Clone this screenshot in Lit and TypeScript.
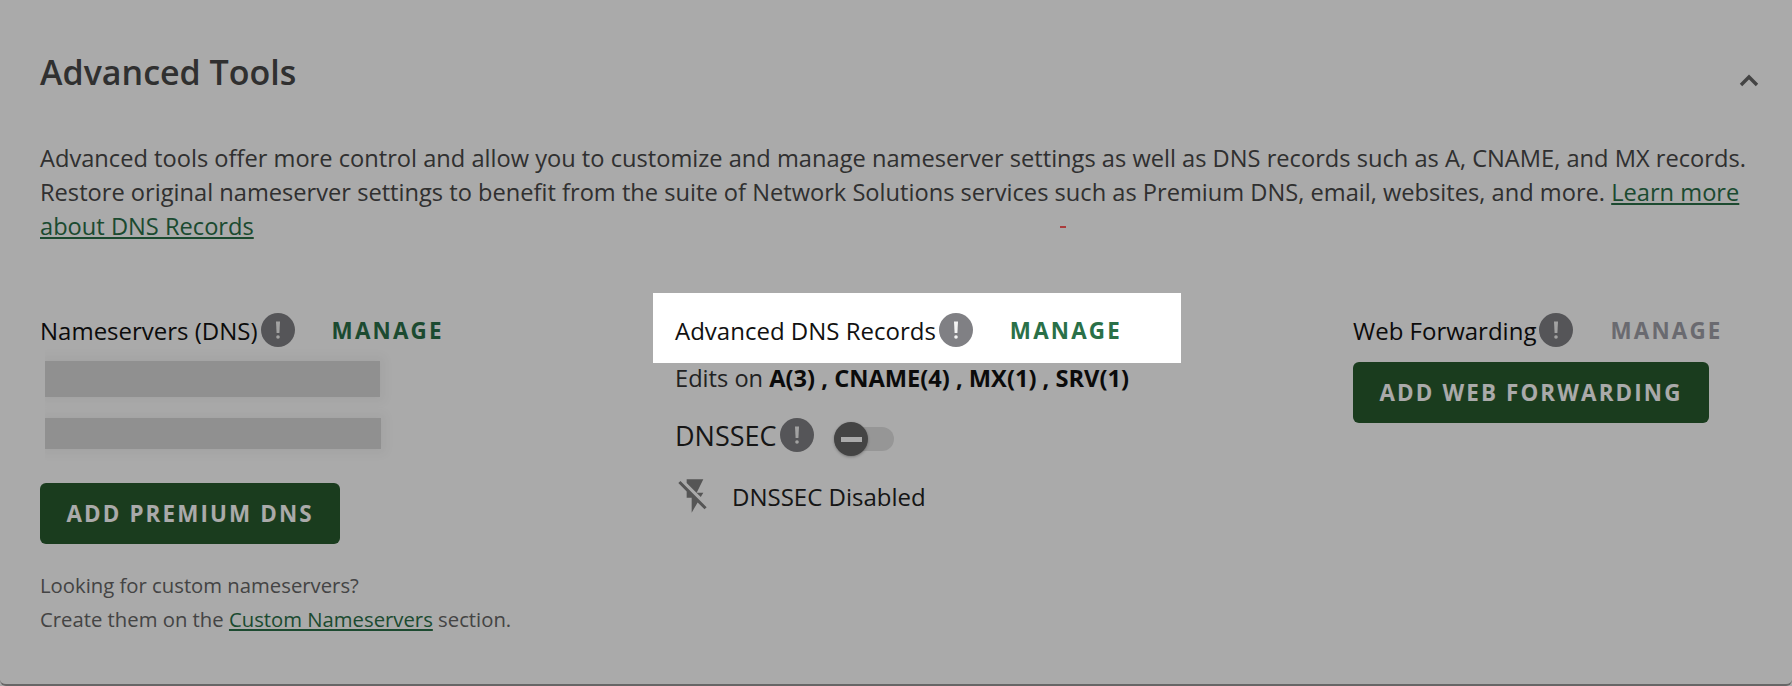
import { LitElement, html, css, svg } from "lit";
import { customElement } from "lit/decorators.js";

const info = html`<span class="info" aria-hidden="true"><svg viewBox="0 0 34 34" width="34" height="34"><path d="M15 8.5h4l-.6 11.5h-2.8z" fill="#f4f4f4"/><circle cx="17" cy="24" r="1.8" fill="#f4f4f4"/></svg></span>`;

@customElement("app-root")
export class AppRoot extends LitElement {
  static styles = css`
    :host {
      display: block;
      position: relative;
      width: 1792px;
      height: 686px;
      overflow: hidden;
      background: #fff;
      font-family: "Open Sans", "Noto Sans", sans-serif;
      color: #333;
    }
    .card {
      box-sizing: border-box;
      height: 686px;
      padding: 46px 40px 0;
      border-bottom: 2px solid #999;
      border-radius: 0 0 6px 6px;
    }
    .head {
      display: flex;
      justify-content: space-between;
      height: 52px;
    }
    h2 {
      margin: 0;
      font-size: 34px;
      line-height: 52px;
      font-weight: 600;
      color: #484848;
    }
    .chev {
      margin: 26px -8px 0 0;
      display: block;
    }
    p.intro {
      margin: 43px 0 0;
      font-size: 23.65px;
      line-height: 34px;
      color: #484848;
    }
    a {
      color: #2a7048;
      text-decoration: underline;
    }
    .cols {
      margin-top: 70px;
      display: grid;
      grid-template-columns: 635px 678px 1fr;
    }
    .row {
      display: flex;
      align-items: center;
      height: 34px;
      font-size: 24px;
      color: #111;
    }
    .info {
      flex: none;
      display: block;
      width: 34px;
      height: 34px;
      margin-left: 3px;
      border-radius: 50%;
      background: #808084;
    }
    .info svg {
      display: block;
    }
    .manage {
      margin-left: 37px;
      font-size: 22.4px;
      font-weight: 700;
      letter-spacing: 2.2px;
      color: #2a7048;
    }
    .manage.off {
      color: #a0a0a8;
    }
    .redact {
      background: #d8d8d8;
      box-shadow: 0 0 10px 5px #f6f6f6;
      clip-path: inset(-14px -14px -14px 0);
      margin-left: 5px;
    }
    .r1 {
      width: 335px;
      height: 36px;
      margin-top: 14px;
    }
    .r2 {
      width: 336px;
      height: 31px;
      margin-top: 21px;
    }
    .btn {
      display: inline-flex;
      align-items: center;
      box-sizing: border-box;
      height: 61px;
      padding: 0 26.5px;
      border: 0;
      border-radius: 6px;
      background: #285a2e;
      color: #fff;
      font: 700 22.4px "Open Sans", sans-serif;
      letter-spacing: 2.13px;
    }
    .c1 .btn {
      margin-top: 34px;
    }
    .c3 .btn {
      margin-top: 15px;
    }
    .hint {
      margin: 24px 0 0;
      font-size: 20.3px;
      line-height: 34px;
      color: #666;
    }
    .edits {
      margin-top: 14px;
      height: 34px;
      line-height: 34px;
      font-size: 23.65px;
      color: #333;
    }
    .edits b {
      color: #111;
      font-weight: 700;
    }
    .dnssec {
      margin-top: 21px;
      display: flex;
      align-items: center;
      height: 38px;
      font-size: 27px;
      color: #222;
    }
    .toggle {
      position: relative;
      margin-left: 20px;
      width: 60px;
      height: 24px;
      border-radius: 12px;
      background: #e2e2e2;
      top: 4px;
    }
    .knob {
      position: absolute;
      left: 0;
      top: -5px;
      width: 34px;
      height: 34px;
      border-radius: 50%;
      background: #666;
      box-shadow: 0 1px 3px rgba(0, 0, 0, 0.3);
    }
    .knob::after {
      content: "";
      position: absolute;
      left: 7px;
      right: 6px;
      top: 15px;
      height: 4.5px;
      background: #fff;
    }
    .status {
      margin-top: 22px;
      display: flex;
      align-items: center;
      gap: 17px;
      height: 40px;
      font-size: 24px;
      color: #222;
    }
    .status svg {
      display: block;
    }
    .veil {
      position: absolute;
      left: 653px;
      top: 293px;
      width: 528px;
      height: 70px;
      box-shadow: 0 0 0 2000px rgba(0, 0, 0, 0.335);
    }
    .speck {
      position: absolute;
      left: 1060px;
      top: 226px;
      width: 6px;
      height: 2px;
      background: #ff5a5a;
    }
  `;

  render() {
    return html`
      <div class="card">
        <div class="head">
          <h2>Advanced Tools</h2>
          <svg class="chev" width="22" height="16" viewBox="0 0 22 16">
            ${svg`<polyline points="3,13 11,5 19,13" fill="none" stroke="#666" stroke-width="3.4"/>`}
          </svg>
        </div>
        <p class="intro">Advanced tools offer more control and allow you to customize and manage nameserver settings as well as DNS records such as A, CNAME, and MX records. Restore original nameserver settings to benefit from the suite of Network Solutions services such as Premium DNS, email, websites, and more. <a href="#">Learn more about DNS Records</a></p>
        <div class="cols">
          <div class="c1">
            <div class="row">Nameservers (DNS)${info}<span class="manage">MANAGE</span></div>
            <div class="redact r1"></div>
            <div class="redact r2"></div>
            <div class="btn">ADD PREMIUM DNS</div>
            <p class="hint">Looking for custom nameservers?<br />Create them on the <a href="#">Custom Nameservers</a> section.</p>
          </div>
          <div class="c2">
            <div class="row">Advanced DNS Records${info}<span class="manage">MANAGE</span></div>
            <div class="edits">Edits on <b>A(3) , CNAME(4) , MX(1) , SRV(1)</b></div>
            <div class="dnssec">DNSSEC${info}<div class="toggle"><div class="knob"></div></div></div>
            <div class="status">
              <svg width="40" height="40" viewBox="0 0 24 24"><path fill="#808080" d="M3.27 3L2 4.27l5 5V13h3v9l3.58-6.14L17.73 20 19 18.73 3.27 3zM17 10h-4l4-8H7v2.18l8.46 8.46L17 10z"/></svg>
              <span>DNSSEC Disabled</span>
            </div>
          </div>
          <div class="c3">
            <div class="row">Web Forwarding${info}<span class="manage off">MANAGE</span></div>
            <div class="btn">ADD WEB FORWARDING</div>
          </div>
        </div>
      </div>
      <div class="speck"></div>
      <div class="veil"></div>
    `;
  }
}
